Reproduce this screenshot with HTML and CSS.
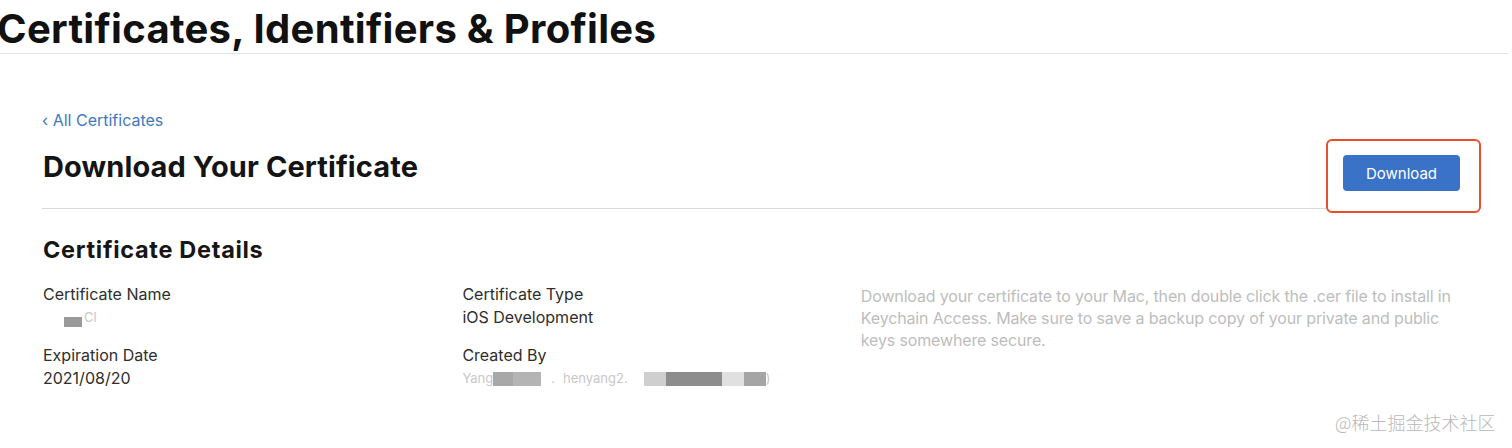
FILE: index.html
```html
<!DOCTYPE html>
<html>
<head>
<meta charset="utf-8">
<link rel="stylesheet" href="styles.css">
</head>
<body>
<header class="top">
  <h1 class="top-title">Certificates, Identifiers &amp; Profiles</h1>
</header>
<main class="content">
  <a class="back" href="#">‹ All Certificates</a>
  <div class="head-row">
    <h2 class="page-title">Download Your Certificate</h2>
    <div class="btn-wrap">
      <span class="annot"></span>
      <button class="btn">Download</button>
    </div>
  </div>
  <h3 class="section-title">Certificate Details</h3>
  <div class="details">
    <div class="col">
      <div class="field">
        <div class="label">Certificate Name</div>
        <div class="value"><span class="redact r-name"></span><span class="faint">Cl</span></div>
      </div>
      <div class="field">
        <div class="label">Expiration Date</div>
        <div class="value">2021/08/20</div>
      </div>
    </div>
    <div class="col">
      <div class="field">
        <div class="label">Certificate Type</div>
        <div class="value">iOS Development</div>
      </div>
      <div class="field">
        <div class="label">Created By</div>
        <div class="value smudge"><span class="faint">Yang</span><span class="redact r1"></span><span class="redact r2"></span><span class="faint gap">.</span><span class="faint">henyang2.</span><span class="redact r3"></span><span class="redact r4"></span><span class="redact r5"></span><span class="redact r6"></span><span class="faint">)</span></div>
      </div>
    </div>
    <p class="desc">Download your certificate to your Mac, then double click the .cer file to install in Keychain Access. Make sure to save a backup copy of your private and public keys somewhere secure.</p>
  </div>
</main>
<div class="watermark">@稀土掘金技术社区</div>
</body>
</html>
```
FILE: styles.css
```css
html, body {
  margin: 0;
  padding: 0;
  background: #fff;
  font-family: Inter, "Noto Sans", "Noto Sans CJK SC", sans-serif;
  color: #333;
  width: 1512px;
  height: 448px;
  overflow: hidden;
  position: relative;
}
.top {
  height: 53px;
  border-bottom: 1px solid #e3e3e3;
  margin-right: 4px;
}
.top-title {
  margin: 0 0 0 -3px;
  padding-top: 6px;
  font-size: 40px;
  line-height: 46px;
  font-weight: 700;
  color: #111;
  letter-spacing: 0.3px;
}
.content {
  padding: 56px 0 0 42px;
  width: 1418px;
}
.back {
  display: block;
  color: #4079be;
  text-decoration: none;
  font-size: 16px;
  line-height: 20px;
  height: 20px;
}
.head-row {
  display: flex;
  justify-content: space-between;
  align-items: flex-start;
  border-bottom: 1px solid #d9d9d9;
  height: 76px;
  margin-top: 2px;
}
.page-title {
  margin: 18px 0 0 1px;
  font-size: 29px;
  line-height: 34px;
  font-weight: 700;
  color: #141414;
  letter-spacing: 0.1px;
}
.btn-wrap {
  position: relative;
  margin-top: 23px;
}
.btn {
  position: relative;
  display: block;
  width: 117px;
  height: 36px;
  background: #3a72c8;
  color: #fff;
  border: none;
  border-radius: 4px;
  font-family: Inter, "Noto Sans", sans-serif;
  font-size: 15px;
}
.annot {
  position: absolute;
  left: -17px;
  top: -16px;
  width: 151px;
  height: 70px;
  border: 2.5px solid #e5502e;
  border-radius: 6px;
  background: #fff;
}
.section-title {
  margin: 27px 0 0 1px;
  font-size: 23.5px;
  line-height: 28px;
  font-weight: 700;
  color: #161616;
  letter-spacing: 0.7px;
}
.details {
  display: flex;
  margin-top: 19px;
  margin-left: 1px;
}
.col {
  width: 420px;
  display: flex;
  flex-direction: column;
  gap: 15px;
}
.col:nth-child(2) {
  width: 399px;
}
.label, .value {
  font-size: 16px;
  line-height: 23px;
  color: #2e2e2e;
}
.value {
  height: 23px;
  display: flex;
  align-items: center;
}
.faint {
  color: #c8c8c8;
  font-size: 13px;
}
.redact {
  display: inline-block;
  background: #9a9a9a;
  height: 10px;
}
.r-name { width: 18px; margin: 8px 2px 0 21px; }
.r1 { width: 20px; height: 14px; background: #a8a8a8; }
.r2 { width: 28px; height: 14px; background: #b4b4b4; margin-right: 10px; }
.gap { margin-right: 8px; }
.r3 { width: 22px; height: 14px; background: #cfcfcf; margin-left: 16px; }
.r4 { width: 56px; height: 14px; background: #8d8d8d; }
.r5 { width: 22px; height: 14px; background: #e0e0e0; }
.r6 { width: 22px; height: 14px; background: #a5a5a5; }
.desc {
  margin: 2px 0 0 0;
  width: 600px;
  font-size: 16px;
  line-height: 22px;
  color: #bdbdbd;
  letter-spacing: -0.15px;
}
.watermark {
  position: absolute;
  left: 1335px;
  top: 410px;
  font-size: 18px;
  line-height: 24px;
  color: #b8b8b8;
  font-family: "Noto Sans CJK SC", sans-serif;
  font-weight: 300;
}
```
